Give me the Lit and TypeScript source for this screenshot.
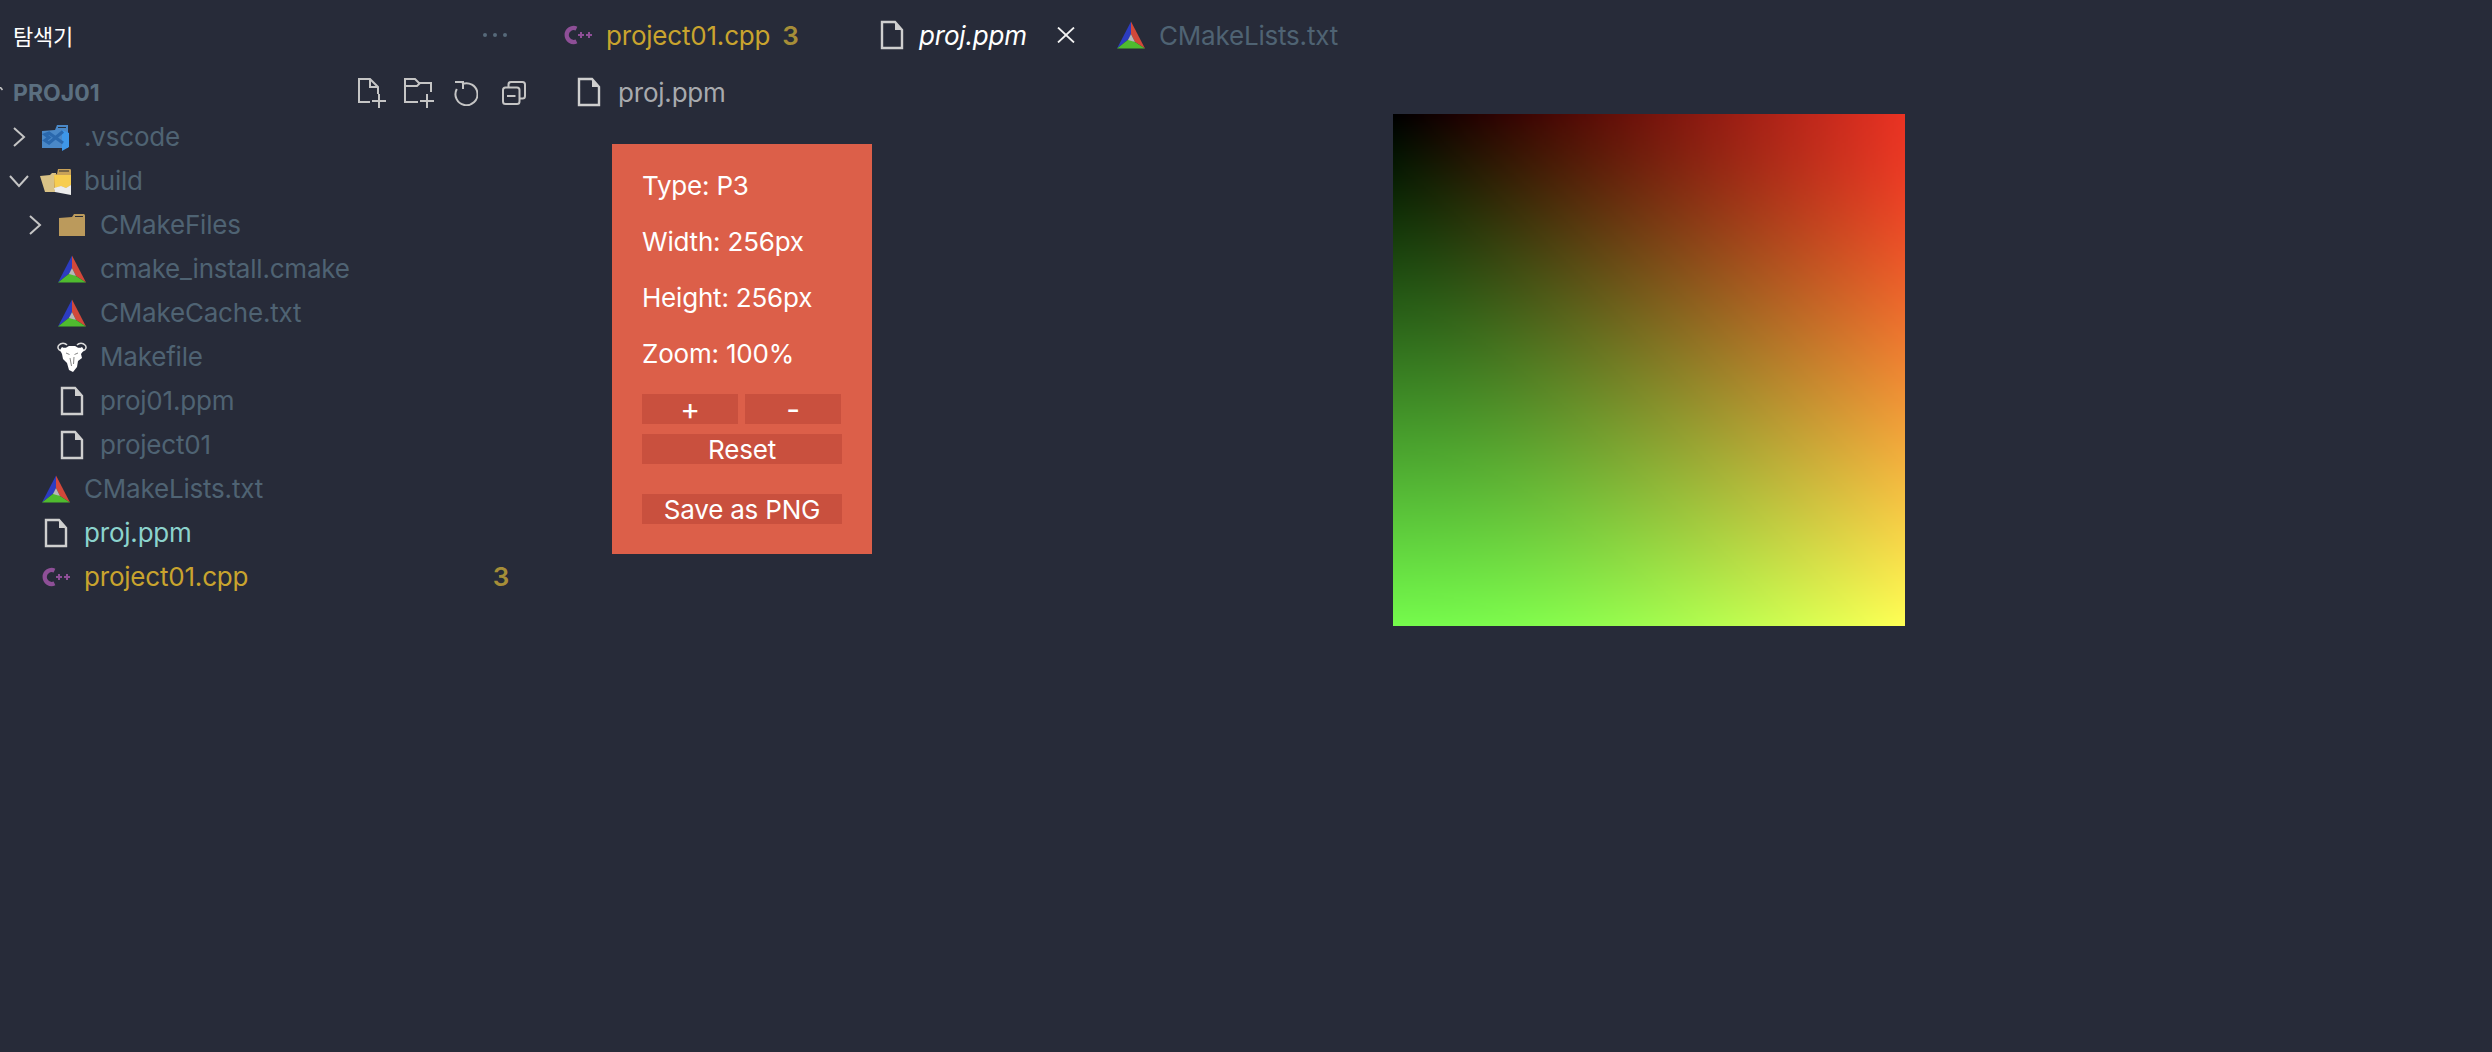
import { LitElement, html, css } from 'lit';
import { customElement } from 'lit/decorators.js';

// ---- icons ----
const fileIcon = html`<svg width="24" height="30" viewBox="0 0 24 30">
  <path d="M2 2H15L22 10V28H2Z" fill="none" stroke="#cfcfcf" stroke-width="2.4"/>
  <path d="M15 2V10H22Z" fill="#cfcfcf"/>
</svg>`;

const cmakeIcon = html`<svg width="28" height="28" viewBox="0 0 28 28">
  <path d="M14 0.5L0 27.5L12 18L14 13Z" fill="#2c3cc0"/>
  <path d="M14 0.5V13L18 21L28 27.5Z" fill="#d2483a"/>
  <path d="M0 27.5H28L18 21L12 18Z" fill="#4fbb2f"/>
  <path d="M14 13L11 19L18 21Z" fill="#b8b8b8"/>
</svg>`;

const cppIcon = html`<svg width="28" height="22" viewBox="0 0 28 22">
  <path d="M12.5 4.6A7 7 0 1 0 12.5 17.4" fill="none" stroke="#8e4f97" stroke-width="4.2"/>
  <path d="M14 11H20M17 8V14M22 11H28M25 8V14" stroke="#8e4f97" stroke-width="2"/>
</svg>`;

const folderIcon = html`<svg width="28" height="24" viewBox="0 0 28 24">
  <path d="M1 5L14 4L16 1H25C26.5 1 27 1.5 27 3V23H1Z" fill="#bb9a5c"/>
  <path d="M17 3.5H25" stroke="#2a2d35" stroke-width="1"/>
</svg>`;

const vscodeIcon = html`<svg width="28" height="28" viewBox="0 0 28 28">
  <path d="M0 8L13 7L15 2H26V25H0Z" fill="#4a88c7"/>
  <path d="M16 4.5H24" stroke="#27313f" stroke-width="1"/>
  <path d="M20 7L27 10V24L20 28Z" fill="#3e97e8"/>
  <path d="M21 8.5L7 20L3 17.5L7 14.5L3 11.5L7 10L21 20" fill="none" stroke="#2a68ad" stroke-width="3.2"/>
</svg>`;

const buildIcon = html`<svg width="32" height="28" viewBox="0 0 32 28">
  <path d="M0 9L10 8L12 6H16V25H5Z" fill="#d9c286"/>
  <path d="M14 8L17 7L18 2H30C31 2 31 3 31 4V26L14 24Z" fill="#c9a258"/>
  <path d="M14 8H31V18L26 21L21 19L15 21Z" fill="#f7cd4f"/>
  <path d="M14 21L21 19L26 21L31 18V28L15 25Z" fill="#ececec"/>
  <path d="M19 4H29" stroke="#2a2d35" stroke-width="1"/>
</svg>`;

const gnuIcon = html`<svg width="30" height="30" viewBox="0 0 30 30">
  <path d="M6 9C1 9 0 5 2 3C4 0.5 8 0.5 10 3M24 9C29 9 30 5 28 3C26 0.5 22 0.5 20 3" fill="none" stroke="#dcdcdc" stroke-width="1.5"/>
  <path d="M5 5C8 7 10 5 12 4H18C20 5 22 7 25 5L27 8L24 12L25 16L21 19L20 25L16 30L12 28L10 21L6 17L5 12L3 8Z" fill="#fff"/>
  <path d="M9 11L12.5 12.5M21 11L17.5 12.5M13 16L14.5 24M17 15L16.5 22" stroke="#666" stroke-width="0.8"/>
</svg>`;

const chevronRight = html`<svg width="14" height="22" viewBox="0 0 14 22">
  <path d="M2 2L12 11L2 20" fill="none" stroke="#c5c5c5" stroke-width="2"/>
</svg>`;

const chevronDown = html`<svg width="22" height="14" viewBox="0 0 22 14">
  <path d="M2 2L11 12L20 2" fill="none" stroke="#c5c5c5" stroke-width="2"/>
</svg>`;

const clippedTwistie = html`<svg class="clipped" width="3" height="4" viewBox="0 0 3 4">
  <path d="M0 0L2.5 3" fill="none" stroke="#c5c5c5" stroke-width="1.6"/>
</svg>`;

const newFile = html`<svg width="28" height="30" viewBox="0 0 28 30">
  <path d="M12 24H1V1H12L20 9V16M12 1V9H20" fill="none" stroke="#c5c5c5" stroke-width="2"/>
  <path d="M14 23H28M21 16V30" stroke="#c5c5c5" stroke-width="2"/>
</svg>`;

const newFolder = html`<svg class="folder" width="30" height="30" viewBox="0 0 30 30">
  <path d="M14 24H1V1H11L15 5H27V14M1 8H13L16 5" fill="none" stroke="#c5c5c5" stroke-width="2"/>
  <path d="M16 23H30M23 16V30" stroke="#c5c5c5" stroke-width="2"/>
</svg>`;

const refresh = html`<svg width="24" height="26" viewBox="0 0 24 26">
  <path d="M8 4.2A11 11 0 1 1 2.8 9M1 2H9V9" fill="none" stroke="#c5c5c5" stroke-width="2"/>
</svg>`;

const collapse = html`<svg class="collapse" width="24" height="24" viewBox="0 0 24 24">
  <rect x="1" y="6.5" width="16.5" height="16.5" rx="2.5" fill="none" stroke="#c5c5c5" stroke-width="2"/>
  <path d="M6.5 6V3.5C6.5 2 7.5 1 9 1H20.5C22 1 23 2 23 3.5V15C23 16.5 22 17.5 20.5 17.5H18" fill="none" stroke="#c5c5c5" stroke-width="2"/>
  <path d="M5 15H13.5" stroke="#c5c5c5" stroke-width="2"/>
</svg>`;

const closeIcon = html`<svg width="20" height="16" viewBox="0 0 20 16">
  <path d="M2 0.5L18 15.5M18 0.5L2 15.5" stroke="#f2f2f2" stroke-width="1.8"/>
</svg>`;

type Row = {
  name: string;
  depth: number;
  icon: unknown;
  twistie?: 'open' | 'closed';
  kind?: 'added' | 'error';
  badge?: string;
};

const rows: Row[] = [
  { name: '.vscode', depth: 0, icon: vscodeIcon, twistie: 'closed' },
  { name: 'build', depth: 0, icon: buildIcon, twistie: 'open' },
  { name: 'CMakeFiles', depth: 1, icon: folderIcon, twistie: 'closed' },
  { name: 'cmake_install.cmake', depth: 1, icon: cmakeIcon },
  { name: 'CMakeCache.txt', depth: 1, icon: cmakeIcon },
  { name: 'Makefile', depth: 1, icon: gnuIcon },
  { name: 'proj01.ppm', depth: 1, icon: fileIcon },
  { name: 'project01', depth: 1, icon: fileIcon },
  { name: 'CMakeLists.txt', depth: 0, icon: cmakeIcon },
  { name: 'proj.ppm', depth: 0, icon: fileIcon, kind: 'added' },
  { name: 'project01.cpp', depth: 0, icon: cppIcon, kind: 'error', badge: '3' },
];

// sRGB -> Display P3 values, that is how the capture stored the picture
const toLinear = (c: number) => (c <= 0.04045 ? c / 12.92 : Math.pow((c + 0.055) / 1.055, 2.4));
const toGamma = (c: number) => (c <= 0.0031308 ? c * 12.92 : 1.055 * Math.pow(c, 1 / 2.4) - 0.055);

@customElement('app-root')
export class AppRoot extends LitElement {
  static styles = css`
    :host {
      display: block;
      height: 1052px;
      overflow: hidden;
      background: #272b39;
      font-family: 'Inter', 'Noto Sans CJK KR', sans-serif;
      font-size: 26px;
      letter-spacing: -0.2px;
      color: #fff;
    }
    .layout { display: flex; height: 100%; }

    .sidebar { width: 540px; flex: none; overflow: hidden; }
    .title {
      height: 70px;
      display: flex;
      align-items: center;
      justify-content: space-between;
      padding: 0 33px 0 13px;
      font-size: 22px;
    }
    .dots { display: flex; gap: 6px; }
    .dots i { width: 4px; height: 4px; border-radius: 50%; background: #56697a; }
    .project {
      height: 45px;
      display: flex;
      align-items: center;
      padding-left: 13px;
      color: #5b6f80;
      font-size: 23px;
      font-weight: 700;
      letter-spacing: 0;
    }
    .project .clipped { margin-left: -13px; margin-right: 10px; margin-top: -8px; }
    .project .actions {
      margin-left: auto;
      margin-right: 14px;
      display: flex;
      align-items: center;
      gap: 20px;
    }
    .project .folder { margin-left: -2px; }
    .project .collapse { margin-left: 4px; }
    .row {
      height: 44px;
      display: flex;
      align-items: center;
      color: #4f6373;
    }
    .row.added { color: #8cd3cd; }
    .row.error { color: #c9a42e; }
    .label { padding-bottom: 2px; }
    .twistie {
      width: 22px;
      height: 44px;
      flex: none;
      display: flex;
      align-items: center;
      justify-content: center;
    }
    .icon {
      width: 32px;
      height: 44px;
      flex: none;
      margin-left: 10px;
      margin-right: 12px;
      display: flex;
      align-items: center;
      justify-content: center;
    }
    .badge { margin-left: auto; margin-right: 31px; color: #a68e38; font-weight: 600; }

    .editor { flex: 1; display: flex; flex-direction: column; min-width: 0; }
    .tabs { height: 70px; display: flex; }
    .tab {
      display: flex;
      align-items: center;
      box-sizing: border-box;
      padding-left: 24px;
      color: #4f6373;
      flex: none;
    }
    .tab .glyph { width: 28px; display: flex; justify-content: center; margin-right: 14px; }
    .tab.first { width: 314px; color: #c9a42e; }
    .tab.first .count { margin-left: 12px; color: #a68e38; font-weight: 600; }
    .tab.active { width: 239px; color: #fff; font-style: italic; }
    .tab.active .glyph { margin-right: 13px; }
    .tab.active .close { display: flex; margin-left: 29px; }
    .crumbs {
      height: 40px;
      margin: 2px 0;
      display: flex;
      align-items: center;
      padding-left: 37px;
      gap: 17px;
      color: #a8aaae;
    }

    .viewer { display: flex; align-items: flex-start; padding-left: 72px; }
    .panel {
      width: 260px;
      height: 410px;
      flex: none;
      margin-top: 30px;
      padding: 26px 30px 0;
      box-sizing: border-box;
      background: #dc5f49;
    }
    .panel p { margin: 0 0 24px; height: 32px; line-height: 32px; }
    .zoom { display: grid; grid-template-columns: 96px 96px; gap: 7px; margin-top: 24px; }
    .btn {
      display: block;
      height: 30px;
      line-height: 32px;
      text-align: center;
      background: #c9503e;
    }
    .zoom .btn { font-size: 30px; line-height: 30px; }
    .reset { width: 200px; margin-top: 10px; }
    .save { width: 200px; margin-top: 30px; }
    canvas {
      display: block;
      width: 512px;
      height: 512px;
      margin-left: 521px;
      flex: none;
    }
  `;

  firstUpdated() {
    const canvas = this.renderRoot.querySelector('canvas') as HTMLCanvasElement;
    const ctx = canvas.getContext('2d')!;
    const img = ctx.createImageData(256, 256);
    for (let y = 0; y < 256; y++) {
      for (let x = 0; x < 256; x++) {
        const r = toLinear(x / 255);
        const g = toLinear(y / 255);
        const i = (y * 256 + x) * 4;
        img.data[i] = 255 * toGamma(0.8225 * r + 0.1774 * g);
        img.data[i + 1] = 255 * toGamma(0.0332 * r + 0.9669 * g);
        img.data[i + 2] = 255 * toGamma(0.0171 * r + 0.0724 * g);
        img.data[i + 3] = 255;
      }
    }
    ctx.putImageData(img, 0, 0);
  }

  renderRow(r: Row) {
    return html`
      <div class="row ${r.kind ?? ''}" style="padding-left:${8 + r.depth * 16}px">
        <span class="twistie">
          ${r.twistie === 'open' ? chevronDown : r.twistie === 'closed' ? chevronRight : ''}
        </span>
        <span class="icon">${r.icon}</span>
        <span class="label">${r.name}</span>
        ${r.badge ? html`<span class="badge label">${r.badge}</span>` : ''}
      </div>
    `;
  }

  render() {
    return html`
      <div class="layout">
        <aside class="sidebar">
          <div class="title">
            <span>탐색기</span>
            <span class="dots"><i></i><i></i><i></i></span>
          </div>
          <div class="project">
            ${clippedTwistie}
            <span>PROJ01</span>
            <span class="actions">${newFile}${newFolder}${refresh}${collapse}</span>
          </div>
          ${rows.map(r => this.renderRow(r))}
        </aside>
        <main class="editor">
          <div class="tabs">
            <div class="tab first">
              <span class="glyph">${cppIcon}</span>
              <span>project01.cpp</span>
              <span class="count">3</span>
            </div>
            <div class="tab active">
              <span class="glyph">${fileIcon}</span>
              <span>proj.ppm</span>
              <span class="close">${closeIcon}</span>
            </div>
            <div class="tab">
              <span class="glyph">${cmakeIcon}</span>
              <span>CMakeLists.txt</span>
            </div>
          </div>
          <div class="crumbs">${fileIcon}<span>proj.ppm</span></div>
          <div class="viewer">
            <section class="panel">
              <p>Type: P3</p>
              <p>Width: 256px</p>
              <p>Height: 256px</p>
              <p>Zoom: 100%</p>
              <div class="zoom">
                <span class="btn">+</span>
                <span class="btn">-</span>
              </div>
              <span class="btn reset">Reset</span>
              <span class="btn save">Save as PNG</span>
            </section>
            <canvas width="256" height="256"></canvas>
          </div>
        </main>
      </div>
    `;
  }
}
